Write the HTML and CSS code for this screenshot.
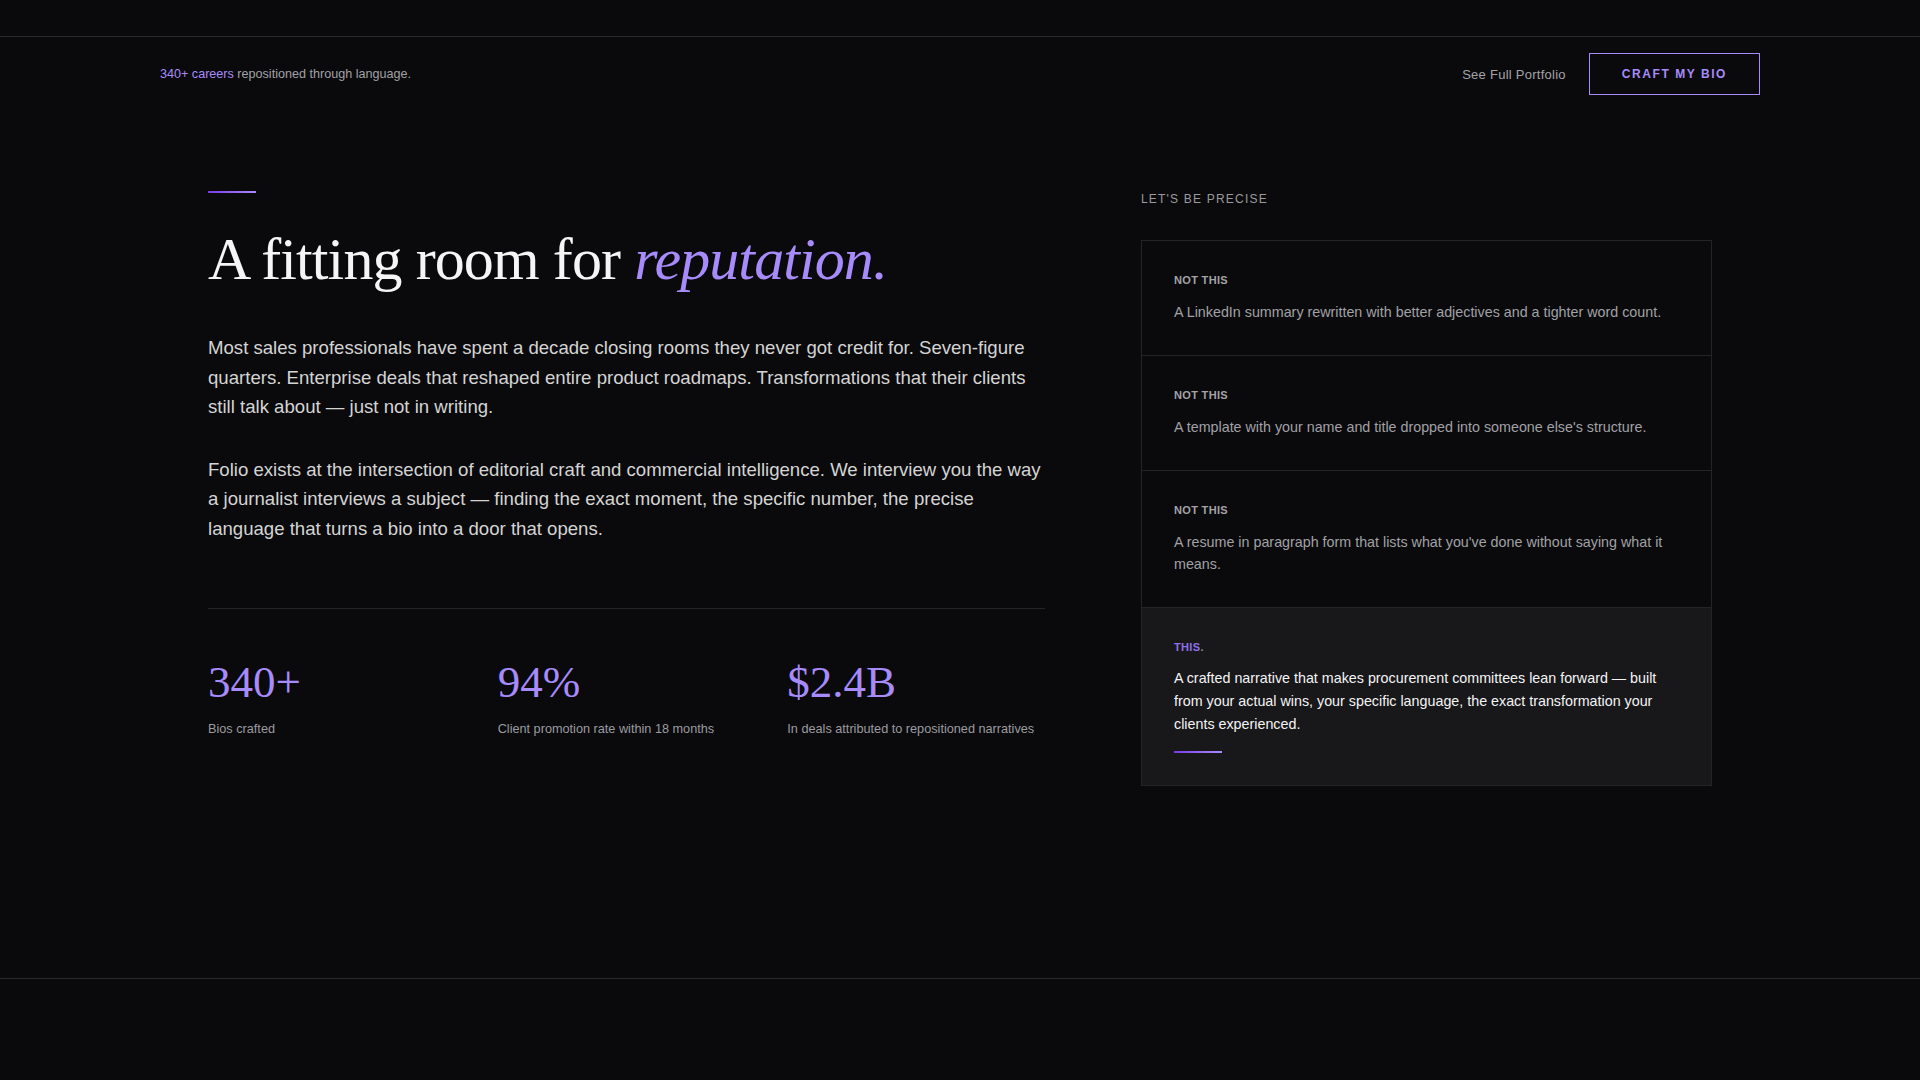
FILE: index.html
```html
<!DOCTYPE html>
<html lang="en">
<head>
<meta charset="utf-8">
<title>Folio — A fitting room for reputation</title>
<link rel="stylesheet" href="styles.css">
</head>
<body>
<div class="topstrip"></div>
<header class="nav">
  <p class="nav-note"><span class="accent">340+ careers</span> repositioned through language.</p>
  <div class="nav-actions">
    <a class="nav-link" href="#">See Full Portfolio</a>
    <a class="btn-outline" href="#">Craft My Bio</a>
  </div>
</header>
<main class="intro">
  <div class="intro-grid">
    <section class="story">
      <div class="rule"></div>
      <h1 class="headline">A fitting room for <em>reputation.</em></h1>
      <p class="lead">Most sales professionals have spent a decade closing rooms they never got credit for. Seven-figure quarters. Enterprise deals that reshaped entire product roadmaps. Transformations that their clients still talk about — just not in writing.</p>
      <p class="lead">Folio exists at the intersection of editorial craft and commercial intelligence. We interview you the way a journalist interviews a subject — finding the exact moment, the specific number, the precise language that turns a bio into a door that opens.</p>
      <div class="stats">
        <div class="stat">
          <div class="stat-num">340+</div>
          <div class="stat-label">Bios crafted</div>
        </div>
        <div class="stat">
          <div class="stat-num">94%</div>
          <div class="stat-label">Client promotion rate within 18 months</div>
        </div>
        <div class="stat">
          <div class="stat-num">$2.4B</div>
          <div class="stat-label">In deals attributed to repositioned narratives</div>
        </div>
      </div>
    </section>
    <aside class="compare">
      <p class="eyebrow">Let's be precise</p>
      <div class="compare-card">
        <div class="row">
          <p class="row-label">Not this</p>
          <p class="row-text">A LinkedIn summary rewritten with better adjectives and a tighter word count.</p>
        </div>
        <div class="row">
          <p class="row-label">Not this</p>
          <p class="row-text">A template with your name and title dropped into someone else's structure.</p>
        </div>
        <div class="row">
          <p class="row-label">Not this</p>
          <p class="row-text">A resume in paragraph form that lists what you've done without saying what it means.</p>
        </div>
        <div class="row row-this">
          <p class="row-label label-this">This<span class="dot">.</span></p>
          <p class="row-text text-this">A crafted narrative that makes procurement committees lean forward — built from your actual wins, your specific language, the exact transformation your clients experienced.</p>
          <div class="rule rule-small"></div>
        </div>
      </div>
    </aside>
  </div>
</main>
<footer class="foot"></footer>
</body>
</html>
```

FILE: styles.css
```css
* { box-sizing: border-box; }

html, body {
  margin: 0;
  padding: 0;
  background: #0a0a0c;
  color: #d4d4d4;
  font-family: "Liberation Sans", Arial, sans-serif;
}

p { margin: 0; }
a { text-decoration: none; }

.topstrip {
  height: 37px;
  border-bottom: 1px solid #2a2a2d;
}

.nav {
  display: flex;
  align-items: center;
  justify-content: space-between;
  padding: 16px 160px 15px;
}

.nav-note {
  font-size: 12.6px;
  color: #a1a1a6;
}

.accent { color: #a78bfa; }

.nav-actions {
  display: flex;
  align-items: center;
  gap: 23px;
}

.nav-link {
  font-size: 13px;
  color: #a3a3a8;
  letter-spacing: 0.02em;
}

.btn-outline {
  display: inline-block;
  border: 1px solid #a78bfa;
  color: #a78bfa;
  font-size: 12px;
  font-weight: 700;
  letter-spacing: 0.13em;
  text-transform: uppercase;
  line-height: 16px;
  padding: 12px 32px 12px 32px;
}

.intro {
  padding: 81px 208px 192px;
  border-bottom: 1px solid #2a2a2d;
}

.intro-grid {
  display: grid;
  grid-template-columns: 1fr 571px;
  column-gap: 96px;
  align-items: start;
}

.rule {
  width: 48px;
  height: 2px;
  background: linear-gradient(90deg, #7c3aed, #a78bfa);
}

.headline {
  margin: 33px 0 41px;
  font-family: "Liberation Serif", "Times New Roman", serif;
  font-weight: 400;
  font-size: 60px;
  line-height: 1.1;
  letter-spacing: -0.015em;
  color: #f5f5f5;
}

.headline em {
  font-style: italic;
  color: #a78bfa;
}

.lead {
  font-size: 18.6px;
  line-height: 1.59;
  color: #d4d4d4;
}

.lead + .lead { margin-top: 33px; }

.stats {
  margin-top: 65px;
  border-top: 1px solid #242427;
  padding-top: 51px;
  display: grid;
  grid-template-columns: repeat(3, 1fr);
  column-gap: 32px;
}

.stat-num {
  font-family: "Liberation Serif", "Times New Roman", serif;
  font-size: 45px;
  line-height: 1;
  color: #a78bfa;
}

.stat-label {
  margin-top: 15px;
  font-size: 12.7px;
  line-height: 1.5;
  color: #9b9ba0;
}

.eyebrow {
  font-size: 12px;
  line-height: 1.4;
  letter-spacing: 0.1em;
  text-transform: uppercase;
  color: #9a9a9e;
}

.compare-card {
  margin-top: 32px;
  border: 1px solid #242427;
}

.row {
  padding: 31px 32px 32px;
}

.row + .row { border-top: 1px solid #242427; }

.row-label {
  font-size: 11px;
  font-weight: 700;
  line-height: 16px;
  letter-spacing: 0.03em;
  text-transform: uppercase;
  color: #a3a3a6;
}

.row-text {
  margin-top: 13px;
  font-size: 14.3px;
  line-height: 1.55;
  color: #a1a1a6;
}

.row-this { background: #18181b; }

.label-this { color: #8b70e6; }
.label-this .dot { color: #8a8a8e; }

.text-this {
  margin-top: 12px;
  color: #f4f4f5;
  line-height: 1.6;
}

.rule-small { margin-top: 15px; }

.foot {
  height: 101px;
}
```
